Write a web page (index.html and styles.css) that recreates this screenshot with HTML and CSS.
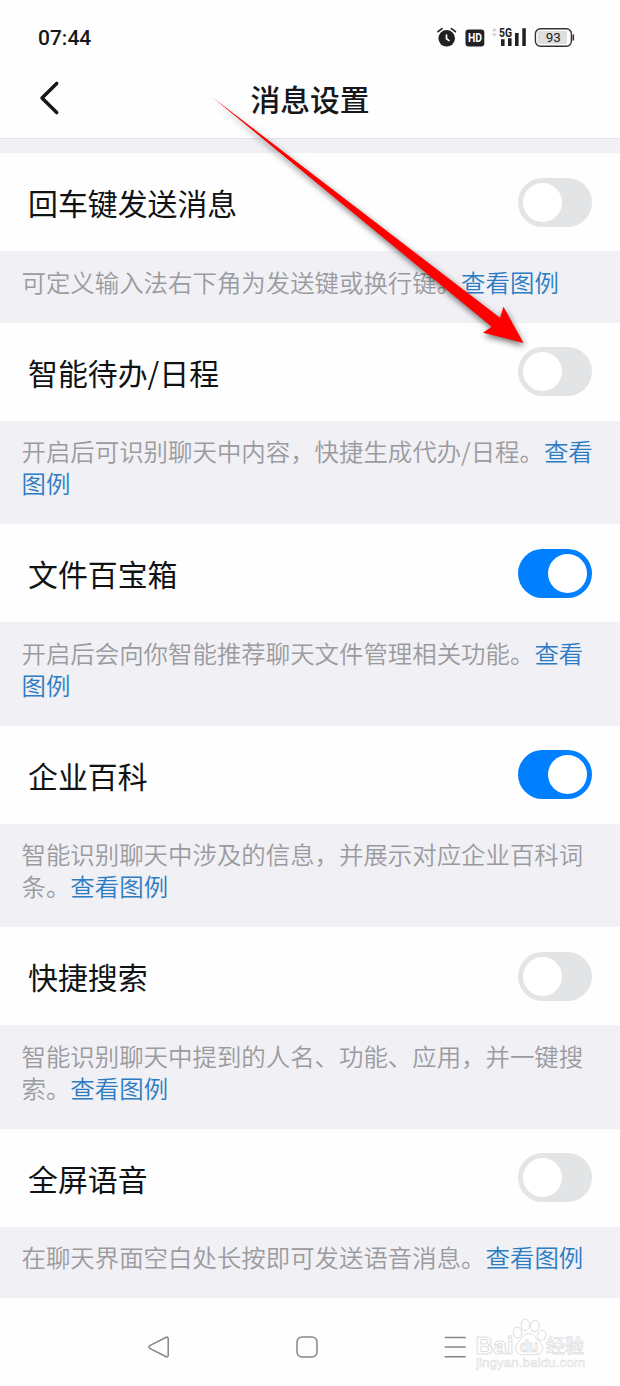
FILE: index.html
```html
<!DOCTYPE html>
<html lang="zh-CN">
<head>
<meta charset="utf-8">
<title>消息设置</title>
<link rel="stylesheet" href="styles.css">
</head>
<body>
<div class="screen">
  <div class="statusbar">
    <span class="time">07:44</span>
    <svg class="status-icons" width="140" height="24" viewBox="0 0 140 24">
      <circle cx="11.7" cy="13.3" r="8.3" fill="#202124"/>
      <path d="M11.5 9.5v4.2l3 2.2" fill="none" stroke="#fff" stroke-width="1.7"/>
      <path d="M3 6.7 7 3.6M16.4 3.6l4 3.1" stroke="#202124" stroke-width="1.7" stroke-linecap="round"/>
      <rect x="30.5" y="4.5" width="18.8" height="17" rx="3" fill="#202124"/>
      <text x="39.9" y="17.4" class="hd" text-anchor="middle" textLength="14" lengthAdjust="spacingAndGlyphs">HD</text>
      <path d="M56.8 6.3 59.5 3l2.7 3.3zM56.8 8.4l2.7 3.3 2.7-3.3z" fill="#cfcfcf"/>
      <path d="M66 14.2h3.6v6.8H66zM73 13.2h3.6V21H73zM80 8h3.6v13H80zM87.3 3.2h3.5V21h-3.5z" fill="#202124"/>
      <text x="64" y="11.5" class="net" textLength="13" lengthAdjust="spacingAndGlyphs">5G</text>
      <rect x="100.4" y="3.8" width="36" height="17.4" rx="5" fill="#fff" stroke="#333" stroke-width="1.4"/>
      <path d="M104.5 6H132v13h-27.5a2 2 0 0 1-2-2V8a2 2 0 0 1 2-2z" fill="#dedede"/>
      <path d="M138.3 9.5v6" stroke="#333" stroke-width="1.6"/>
      <text x="118.3" y="17.4" class="level" text-anchor="middle">93</text>
    </svg>
  </div>
  <header class="navbar">
    <svg class="back" width="24" height="38" viewBox="0 0 24 38"><path d="M18.7 4.4 4 19l14.7 14.6" fill="none" stroke="#15171a" stroke-width="3.5" stroke-linecap="round" stroke-linejoin="round"/></svg>
    <h1 class="title">消息设置</h1>
  </header>
  <main class="settings">
    <div class="row"><span class="label">回车键发送消息</span><span class="switch"></span></div>
    <p class="note">可定义输入法右下角为发送键或换行键。<a class="link">查看图例</a></p>
    <div class="row"><span class="label">智能待办/日程</span><span class="switch"></span></div>
    <p class="note">开启后可识别聊天中内容，快捷生成代办/日程。<a class="link">查看图例</a></p>
    <div class="row"><span class="label">文件百宝箱</span><span class="switch on"></span></div>
    <p class="note">开启后会向你智能推荐聊天文件管理相关功能。<a class="link">查看图例</a></p>
    <div class="row"><span class="label">企业百科</span><span class="switch on"></span></div>
    <p class="note">智能识别聊天中涉及的信息，并展示对应企业百科词条。<a class="link">查看图例</a></p>
    <div class="row"><span class="label">快捷搜索</span><span class="switch"></span></div>
    <p class="note">智能识别聊天中提到的人名、功能、应用，并一键搜索。<a class="link">查看图例</a></p>
    <div class="row"><span class="label">全屏语音</span><span class="switch"></span></div>
    <p class="note">在聊天界面空白处长按即可发送语音消息。<a class="link">查看图例</a></p>
  </main>
  <nav class="sysnav">
    <svg width="24" height="24" viewBox="0 0 24 24"><path d="M3.2 10.4 19.2 2.3q2-.7 2 1.4v16.6q0 2.1-2 1.400L3.200 13.600q-2.600-1.600 0-3.200z"/></svg>
    <svg width="24" height="24" viewBox="0 0 24 24"><rect x="2" y="2" width="20" height="20" rx="5"/></svg>
    <svg width="24" height="24" viewBox="0 0 24 24"><path d="M1.700 2.500h21M1.700 12h21M1.700 21.700h21"/></svg>
  </nav>

  <svg class="arrow" width="330" height="270" viewBox="205 90 330 270">
    <path d="M212 97 500 317.700 503.500 306.700 523.500 343 483 332.700 491.700 326.700z" fill="#fe0000"/>
  </svg>

  <svg class="watermark" width="120" height="64" viewBox="470 1314 120 64">
    <g fill="#fff" stroke="#dedede" stroke-width="1">
      <text x="475.500" y="1353.500" class="wm-brand" textLength="38" lengthAdjust="spacingAndGlyphs">Bai</text>
      <ellipse cx="517.500" cy="1332.500" rx="4.200" ry="5.400" transform="rotate(-10 517.500 1332.500)"/>
      <ellipse cx="525.300" cy="1325" rx="4.300" ry="5.600"/>
      <ellipse cx="535" cy="1326" rx="4.300" ry="5.600" transform="rotate(12 535 1326)"/>
      <ellipse cx="541.800" cy="1335.500" rx="4" ry="5.200" transform="rotate(18 541.800 1335.500)"/>
      <path d="M529 1333.500c5 0 6.500 4.500 10 8s4.500 6 3 9.500c-2 4.700-7 3.500-13 3.500s-11 1.200-13-3.500c-1.500-3.500 0-6 3-9.500s5-8 10-8z"/>
      <text x="520" y="1352" class="wm-du" textLength="18" lengthAdjust="spacingAndGlyphs">du</text>
      <text x="546" y="1352.500" class="wm-cn" textLength="38" lengthAdjust="spacingAndGlyphs">经验</text>
      <text x="476" y="1367" class="wm-url" textLength="109" lengthAdjust="spacingAndGlyphs">jingyan.baidu.com</text>
    </g>
  </svg>
</div>
</body>
</html>
```

FILE: styles.css
```css
* { box-sizing: border-box; }

body {
  margin: 0;
  background: #fff;
  font-family: "Noto Sans CJK SC", sans-serif;
}

.screen {
  position: relative;
  width: 620px;
  height: 1386px;
  overflow: hidden;
  display: flex;
  flex-direction: column;
  background: #fefefe;
}

.statusbar {
  height: 60px;
  padding: 25px 45px 0 38px;
  display: flex;
  justify-content: space-between;
  align-items: flex-start;
}

.time {
  font: 500 21px/26px Roboto, sans-serif;
  color: #17181a;
}

.status-icons { display: block; }
.hd { font: 700 12.5px Roboto, sans-serif; fill: #fff; }
.net { font: 700 13px Roboto, sans-serif; fill: #202124; stroke: #fefefe; stroke-width: 1.5px; paint-order: stroke; }
.level { font: 400 13.5px Roboto, sans-serif; fill: #222; }

.navbar {
  height: 79px;
  padding-bottom: 3px;
  display: grid;
  grid-template-columns: 100px 1fr 100px;
  align-items: center;
  border-bottom: 1px solid #e3e3e8;
}

.back { margin-left: 38px; }

.title {
  margin: 0;
  font-size: 29.8px;
  font-weight: 500;
  line-height: 40px;
  text-align: center;
  color: #15171a;
}

.settings {
  padding-top: 14px;
  background: #f0f0f5;
}

.row {
  height: 98px;
  padding: 0 28px;
  display: flex;
  align-items: center;
  justify-content: space-between;
  background: #fefefe;
}

.label {
  font-size: 29.9px;
  line-height: 44px;
  color: #101214;
}

.switch {
  width: 74px;
  height: 49px;
  padding: 5px;
  border-radius: 25px;
  background: #e2e4e6;
  display: flex;
}

.switch::before {
  content: "";
  width: 39px;
  height: 39px;
  border-radius: 50%;
  background: #fff;
}

.switch.on {
  background: #0080ff;
  justify-content: flex-end;
}

.note {
  margin: 0;
  padding: 14.5px 20px 25px 21.5px;
  font-size: 24.43px;
  font-weight: 350;
  line-height: 32px;
  color: #9b9b9f;
}

.link { color: #2c7cc4; }

.sysnav {
  flex: 1;
  padding: 10px 153px 0 147px;
  display: flex;
  justify-content: space-between;
  align-items: center;
}

.sysnav svg {
  fill: none;
  stroke: #858585;
  stroke-width: 1.5;
}

.arrow {
  position: absolute;
  left: 205px;
  top: 90px;
  filter: drop-shadow(1px 3px 3px rgba(0, 0, 0, .55));
}

.watermark {
  position: absolute;
  left: 470px;
  top: 1314px;
}

.wm-brand { font: 700 24px "Liberation Sans", sans-serif; }
.wm-du { font: 700 17px "Liberation Sans", sans-serif; }
.wm-cn { font: 500 19px "Noto Sans CJK SC", sans-serif; stroke-width: .8; }
.wm-url { font: 400 13.5px "Liberation Sans", sans-serif; stroke-width: .6; }
```
